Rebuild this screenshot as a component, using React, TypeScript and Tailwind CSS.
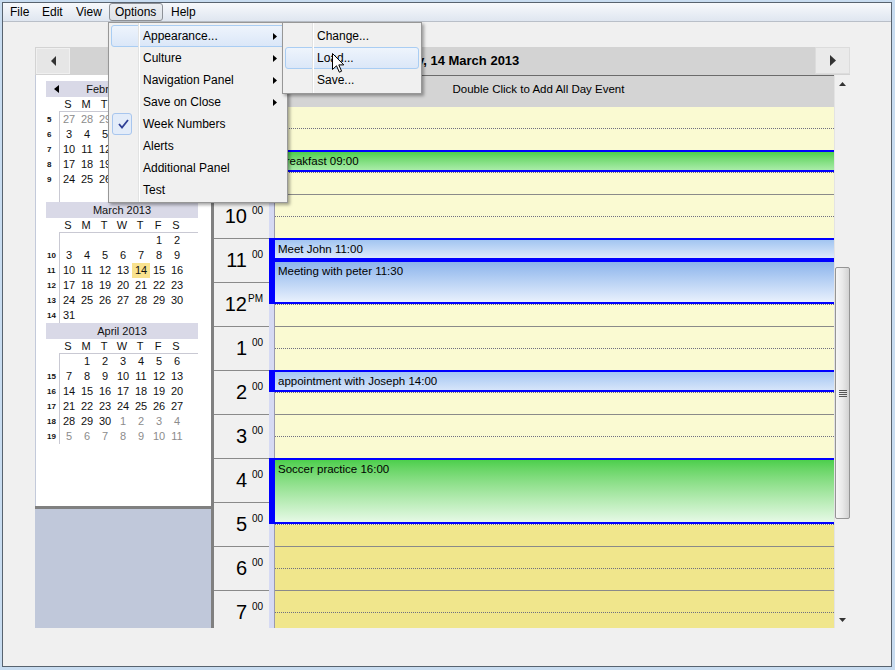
import React from "react";

const sans = "font-['Liberation_Sans',Arial,sans-serif]";

type Cell = { d: number; g?: boolean } | null;
type Week = { wk?: number; days: Cell[] };
type Month = { title: string; arrow?: boolean; sel?: number; weeks: Week[] };

const range = (a: number, b: number, g = false): Cell[] =>
  Array.from({ length: b - a + 1 }, (_, i) => ({ d: a + i, g }));
const blank = (n: number): Cell[] => Array.from({ length: n }, () => null);

const months: Month[] = [
  {
    title: "February 2013",
    arrow: true,
    weeks: [
      { wk: 5, days: [...range(27, 31, true), ...range(1, 2)] },
      { wk: 6, days: range(3, 9) },
      { wk: 7, days: range(10, 16) },
      { wk: 8, days: range(17, 23) },
      { wk: 9, days: [...range(24, 28), ...blank(2)] },
      { days: blank(7) },
    ],
  },
  {
    title: "March 2013",
    sel: 14,
    weeks: [
      { days: [...blank(5), ...range(1, 2)] },
      { wk: 10, days: range(3, 9) },
      { wk: 11, days: range(10, 16) },
      { wk: 12, days: range(17, 23) },
      { wk: 13, days: range(24, 30) },
      { wk: 14, days: [...range(31, 31), ...blank(6)] },
    ],
  },
  {
    title: "April 2013",
    weeks: [
      { days: [...blank(1), ...range(1, 6)] },
      { wk: 15, days: range(7, 13) },
      { wk: 16, days: range(14, 20) },
      { wk: 17, days: range(21, 27) },
      { wk: 18, days: [...range(28, 30), ...range(1, 4, true)] },
      { wk: 19, days: range(5, 11, true) },
    ],
  },
];

const hours = [8, 9, 10, 11, 12, 1, 2, 3, 4, 5, 6, 7];

const events = [
  { t: "Breakfast 09:00", start: 9, dur: 0.5, bg: "bg-linear-to-b from-[#4ccf4c] to-[#a9eca9]" },
  { t: "Meet John 11:00", start: 11, dur: 0.5, bg: "bg-linear-to-b from-[#a2c5f1] to-[#dde9fb]" },
  { t: "Meeting with peter 11:30", start: 11.5, dur: 1, bg: "bg-linear-to-b from-[#8cb4eb] to-[#e9f1fd]" },
  { t: "appointment with Joseph 14:00", start: 14, dur: 0.5, bg: "bg-linear-to-b from-[#a4c6f2] to-[#d6e5fa]" },
  { t: "Soccer practice 16:00", start: 16, dur: 1.5, bg: "bg-linear-to-b from-[#4ccf4c] to-[#e6f9e6]" },
];

function MonthView({ m }: { m: Month }) {
  return (
    <div className="ml-[10px] w-[152px] text-[11px] text-[#111]">
      <div className="relative h-[16px] bg-[#d9d9e7] text-center leading-[16px]">
        {m.arrow && (
          <svg className="absolute left-[8px] top-[4px]" width="5" height="8" viewBox="0 0 5 8">
            <path d="M5 0 L0 4 L5 8 Z" fill="#000" />
          </svg>
        )}
        {m.title}
      </div>
      <div className="flex h-[14px] pl-[13px] leading-[14px]">
        {"SMTWTFS".split("").map((c, i) => (
          <div key={i} className="w-[18px] text-center">
            {c}
          </div>
        ))}
      </div>
      <div className="flex">
        <div className="w-[13px] pt-px">
          {m.weeks.map((w, i) => (
            <div key={i} className="h-[15px] pl-px text-[8px] font-bold leading-[15px]">
              {w.wk}
            </div>
          ))}
        </div>
        <div className="flex-1 border-l border-t border-[#c9c9d3]">
          {m.weeks.map((w, i) => (
            <div key={i} className="flex h-[15px]">
              {w.days.map((c, j) => (
                <div
                  key={j}
                  className={`w-[18px] text-center leading-[15px] ${c && c.g ? "text-[#8c8c8c]" : ""} ${
                    c && !c.g && m.sel === c.d ? "bg-[#f9e28e]" : ""
                  }`}
                >
                  {c?.d}
                </div>
              ))}
            </div>
          ))}
        </div>
      </div>
    </div>
  );
}

function MenuBar() {
  return (
    <div className="flex h-[19px] border-b border-[#b9bfc8] bg-linear-to-b from-[#f7f9fc] to-[#dfe6f0] pl-px text-[12px] leading-[18px] text-black">
      <div className="w-[32px] pl-[6px]">File</div>
      <div className="w-[34px] pl-[6px]">Edit</div>
      <div className="w-[39px] pl-[6px]">View</div>
      <div className="h-[18px] w-[54px] rounded-[3px] border border-[#8d9197] bg-linear-to-b from-[#eceff3] to-[#dde2e8] pl-[5px] leading-[16px]">
        Options
      </div>
      <div className="ml-[2px] w-[40px] pl-[6px]">Help</div>
    </div>
  );
}

function NavBar() {
  return (
    <div className="flex h-[28px] bg-[#d3d3d3]">
      <div className="ml-px mt-px flex h-[26px] w-[34px] items-center justify-center border border-[#f0f0f0] bg-[#e6e6e6]">
        <svg width="5" height="10" viewBox="0 0 5 10">
          <path d="M5 0 L0 5 L5 10 Z" fill="#333" />
        </svg>
      </div>
      <div className="flex-1 text-center text-[13px] font-bold leading-[28px] text-black">Thursday, 14 March 2013</div>
      <div className="flex h-[27px] w-[35px] items-center justify-center border border-[#dcdcdc] bg-[#eaeaea]">
        <svg width="6" height="11" viewBox="0 0 6 11">
          <path d="M0 0 L6 5.5 L0 11 Z" fill="#333" />
        </svg>
      </div>
    </div>
  );
}

function LeftPanel() {
  return (
    <div className="flex w-[179px] flex-col border-r-[3px] border-[#808080]">
      <div className="h-[431px] border-l border-[#c3cada] bg-white pt-[6px]">
        {months.map((m) => (
          <MonthView key={m.title} m={m} />
        ))}
      </div>
      <div className="h-[3px] bg-[#808080]" />
      <div className="flex-1 bg-[#c0c8da]" />
    </div>
  );
}

function HourRow({ h }: { h: number }) {
  const h24 = h < 8 ? h + 12 : h;
  const top = h24 <= 17 ? "bg-[#fafad2]" : "bg-[#f0e68c]";
  const bot = h24 < 17 ? "bg-[#fafad2]" : "bg-[#f0e68c]";
  return (
    <div className="flex h-[44px] shrink-0">
      <div className="flex w-[55px] justify-end border-b border-[#8a8a8a] bg-[#f0f0f0] pr-[6px] pt-[11px] text-black">
        <span className="text-[20px] leading-none">{h}</span>
        <span className="ml-px w-[15px] text-right text-[10px] leading-none">{h === 12 ? "PM" : "00"}</span>
      </div>
      <div className="w-[6px] border-r border-[#9a9ab0] bg-[#d6daf3]" />
      <div className="flex flex-1 flex-col">
        <div className={`h-[22px] border-b border-dotted border-[#6f6f80] ${top}`} />
        <div className={`h-[22px] border-b border-[#8a8a8a] ${bot}`} />
      </div>
    </div>
  );
}

function Scrollbar() {
  return (
    <div className="flex w-[16px] flex-col border-l border-[#e3e3e3] bg-[#f0f0f0]">
      <div className="flex h-[17px] items-center justify-center">
        <svg width="7" height="4" viewBox="0 0 7 4">
          <path d="M3.5 0 L7 4 L0 4 Z" fill="#333" />
        </svg>
      </div>
      <div className="mt-[175px] flex h-[252px] flex-col items-center justify-center rounded-[2px] border border-[#959595] bg-linear-to-r from-[#f6f6f6] via-[#e9e9e9] to-[#d2d2d2]">
        <div className="flex flex-col gap-px">
          <div className="h-px w-[8px] bg-[#555]" />
          <div className="h-px w-[8px] bg-[#555]" />
          <div className="h-px w-[8px] bg-[#555]" />
          <div className="h-px w-[8px] bg-[#555]" />
        </div>
      </div>
      <div className="flex-1" />
      <div className="flex h-[17px] items-center justify-center">
        <svg width="7" height="4" viewBox="0 0 7 4">
          <path d="M0 0 L7 0 L3.5 4 Z" fill="#333" />
        </svg>
      </div>
    </div>
  );
}

function DayView() {
  return (
    <div className="flex w-[636px]">
      <div className="flex w-[620px] flex-col">
        <div className="flex h-[32px] border-t border-[#6b6b6b] bg-[#d4d4d4]">
          <div className="w-[61px]" />
          <div className="flex-1 pr-[32px] pt-[6px] text-center text-[11.5px] leading-[14px] text-black">
            Double Click to Add All Day Event
          </div>
        </div>
        <div className="relative flex min-h-0 flex-1 flex-col overflow-hidden">
          {hours.map((h) => (
            <HourRow key={h} h={h} />
          ))}
          {events.map((e) => {
            const top = (e.start - 8) * 44 - 1;
            const height = e.dur * 44;
            return (
              <React.Fragment key={e.t}>
                <div className="absolute left-[55px] w-[6px] bg-[#0000ff]" style={{ top, height }} />
                <div
                  className={`absolute left-[61px] right-0 border-y-2 border-[#0000ff] pl-[3px] pt-[2px] text-[11.5px] leading-[14px] text-black ${e.bg}`}
                  style={{ top, height }}
                >
                  {e.t}
                </div>
              </React.Fragment>
            );
          })}
        </div>
      </div>
      <Scrollbar />
    </div>
  );
}

function MenuItem({ label, arrow, hi, check }: { label: string; arrow?: boolean; hi?: boolean; check?: boolean }) {
  return (
    <div
      className={`relative mx-[2px] flex h-[22px] items-center border pl-[31px] text-[12px] text-black ${
        hi ? "rounded-[3px] border-[#a9cdf3] bg-linear-to-b from-[#eef4fc] to-[#dbe7f8]" : "border-transparent"
      }`}
    >
      {check && (
        <div className="absolute -top-px left-0 h-[22px] w-[20px] rounded-[3px] border border-[#a8c6ee] bg-[#e3ecf9]">
          <svg className="absolute left-[5px] top-[5px]" width="11" height="10" viewBox="0 0 11 10">
            <path d="M1 5 L4 8.5 L10 1" fill="none" stroke="#2f3f95" strokeWidth="1.8" />
          </svg>
        </div>
      )}
      {label}
      {arrow && (
        <svg className="absolute right-[7px] top-[7px]" width="4" height="7" viewBox="0 0 4 7">
          <path d="M0 0 L4 3.5 L0 7 Z" fill="#000" />
        </svg>
      )}
    </div>
  );
}

function OptionsMenu() {
  return (
    <div className="absolute left-[108px] top-[22px] h-[181px] w-[180px] border border-[#979797] bg-[#f0f0f0] pt-[2px] shadow-[2px_2px_3px_rgba(0,0,0,0.35)]">
      <MenuItem label="Appearance..." arrow hi />
      <MenuItem label="Culture" arrow />
      <MenuItem label="Navigation Panel" arrow />
      <MenuItem label="Save on Close" arrow />
      <MenuItem label="Week Numbers" check />
      <MenuItem label="Alerts" />
      <MenuItem label="Additional Panel" />
      <MenuItem label="Test" />
      <div className="absolute bottom-0 left-[29px] top-0 flex">
        <div className="w-px bg-[#e2e3e3]" />
        <div className="w-px bg-white" />
      </div>
    </div>
  );
}

function AppearanceMenu() {
  return (
    <div className="absolute left-[282px] top-[22px] h-[72px] w-[140px] border border-[#979797] bg-[#f0f0f0] pt-[2px] shadow-[2px_2px_3px_rgba(0,0,0,0.35)]">
      <MenuItem label="Change..." />
      <MenuItem label="Load..." hi />
      <MenuItem label="Save..." />
      <div className="absolute bottom-0 left-[29px] top-0 flex">
        <div className="w-px bg-[#e2e3e3]" />
        <div className="w-px bg-white" />
      </div>
    </div>
  );
}

export default function App() {
  return (
    <div className={`relative h-[670px] w-[895px] overflow-hidden bg-[#c8dcf0] pl-[2px] pt-[2px] ${sans}`}>
      <div className="flex h-[665px] w-[890px] flex-col border border-[#58636f] bg-[#f0f0f0]">
        <MenuBar />
        <div className="ml-[32px] mt-[25px] flex h-[581px] w-[815px] flex-col">
          <NavBar />
          <div className="flex min-h-0 flex-1">
            <LeftPanel />
            <DayView />
          </div>
        </div>
      </div>
      <OptionsMenu />
      <AppearanceMenu />
      <svg className="absolute left-[332px] top-[53px]" width="13" height="21" viewBox="0 0 13 21">
        <path
          d="M0.5 0.5 L0.5 16.5 L4.5 12.8 L7.3 19.2 L9.6 18.2 L6.8 11.9 L11.8 11.9 Z"
          fill="#fff"
          stroke="#000"
          strokeWidth="1"
        />
      </svg>
    </div>
  );
}
